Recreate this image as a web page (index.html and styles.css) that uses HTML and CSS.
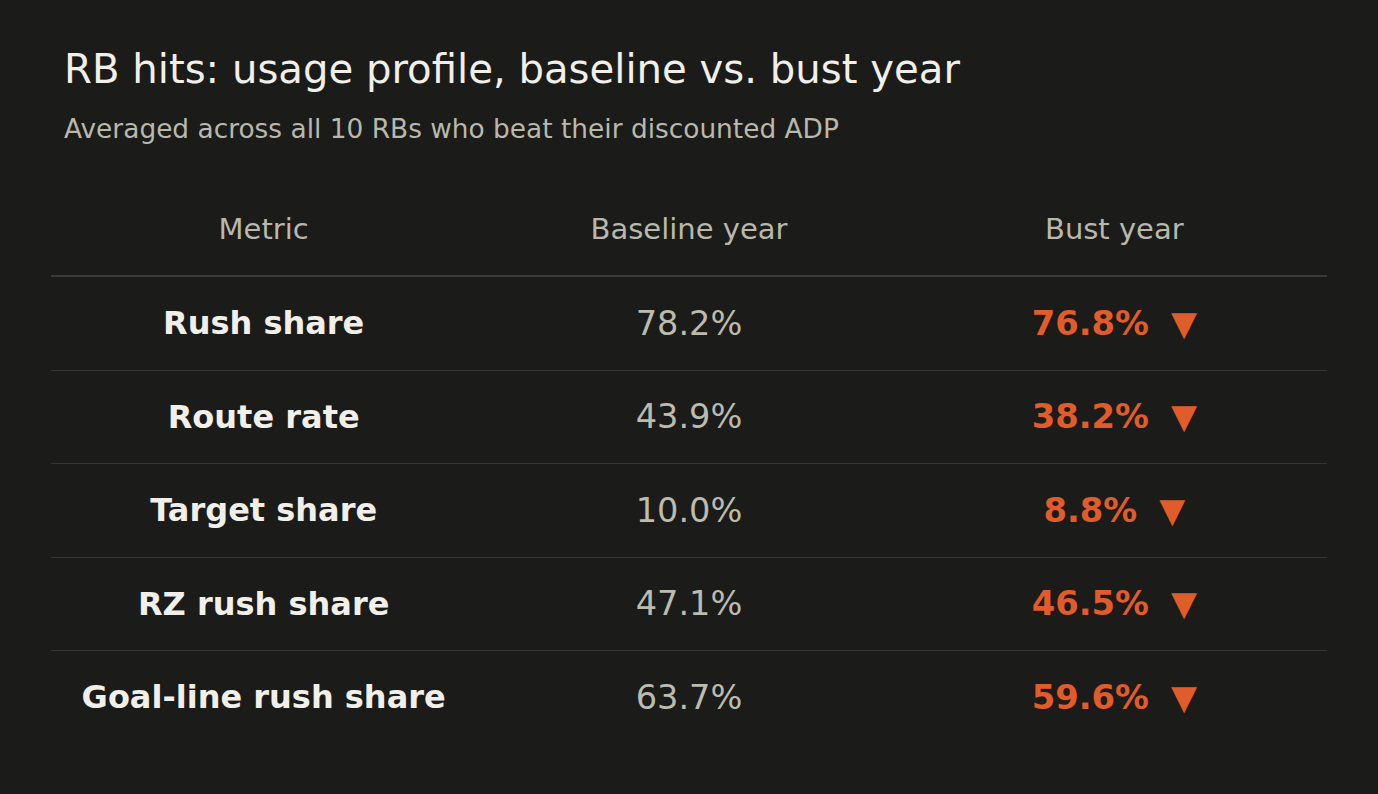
FILE: index.html
```html
<!DOCTYPE html>
<html lang="en">
<head>
<meta charset="utf-8">
<title>RB hits: usage profile</title>
<link rel="stylesheet" href="styles.css">
</head>
<body>
<main class="page">
  <header class="intro">
    <h1 class="title">RB hits: usage profile, baseline vs. bust year</h1>
    <p class="subtitle">Averaged across all 10 RBs who beat their discounted ADP</p>
  </header>
  <table class="stats">
    <thead>
      <tr>
        <th>Metric</th>
        <th>Baseline year</th>
        <th>Bust year</th>
      </tr>
    </thead>
    <tbody>
      <tr>
        <td class="metric">Rush share</td>
        <td class="base">78.2%</td>
        <td class="bust"><span class="val">76.8%</span><span class="arrow">▼</span></td>
      </tr>
      <tr>
        <td class="metric">Route rate</td>
        <td class="base">43.9%</td>
        <td class="bust"><span class="val">38.2%</span><span class="arrow">▼</span></td>
      </tr>
      <tr>
        <td class="metric">Target share</td>
        <td class="base">10.0%</td>
        <td class="bust"><span class="val">8.8%</span><span class="arrow">▼</span></td>
      </tr>
      <tr>
        <td class="metric">RZ rush share</td>
        <td class="base">47.1%</td>
        <td class="bust"><span class="val">46.5%</span><span class="arrow">▼</span></td>
      </tr>
      <tr>
        <td class="metric">Goal-line rush share</td>
        <td class="base">63.7%</td>
        <td class="bust"><span class="val">59.6%</span><span class="arrow">▼</span></td>
      </tr>
    </tbody>
  </table>
</main>
</body>
</html>
```

FILE: styles.css
```css
html, body {
  margin: 0;
  padding: 0;
  background: #1b1b19;
}

body {
  font-family: "DejaVu Sans", Verdana, sans-serif;
  color: #f0efea;
}

.page {
  padding: 0 51px 0 51px;
}

.intro {
  padding: 44px 0 0 13px;
}

.title {
  margin: 0;
  font-size: 40.2px;
  font-weight: 400;
  line-height: 50px;
  color: #f0efea;
}

.subtitle {
  margin: 19px 0 0 0;
  font-size: 26.4px;
  line-height: 32px;
  color: #b9b8ad;
}

.stats {
  width: 100%;
  margin-top: 38px;
  border-collapse: collapse;
  table-layout: fixed;
}

.stats th {
  font-size: 29px;
  font-weight: 400;
  color: #b9b8ad;
  height: 92px;
  padding: 0;
  text-align: center;
  vertical-align: middle;
  border-bottom: 2px solid #3a3a37;
}

.stats td {
  height: 92.5px;
  padding: 0;
  text-align: center;
  vertical-align: middle;
  font-size: 32px;
  border-bottom: 1px solid #353532;
}

.stats tbody tr:last-child td {
  border-bottom: none;
}

.metric {
  font-weight: 700;
  color: #f0efea;
}

.base {
  color: #bcbbb0;
  font-size: 33.6px;
}

.stats td.base {
  font-size: 33.6px;
}

.stats td.bust {
  color: #e05c2a;
  font-weight: 700;
  font-size: 33.8px;
}

.arrow {
  display: inline-block;
  margin-left: 22px;
  font-weight: 400;
}
```
